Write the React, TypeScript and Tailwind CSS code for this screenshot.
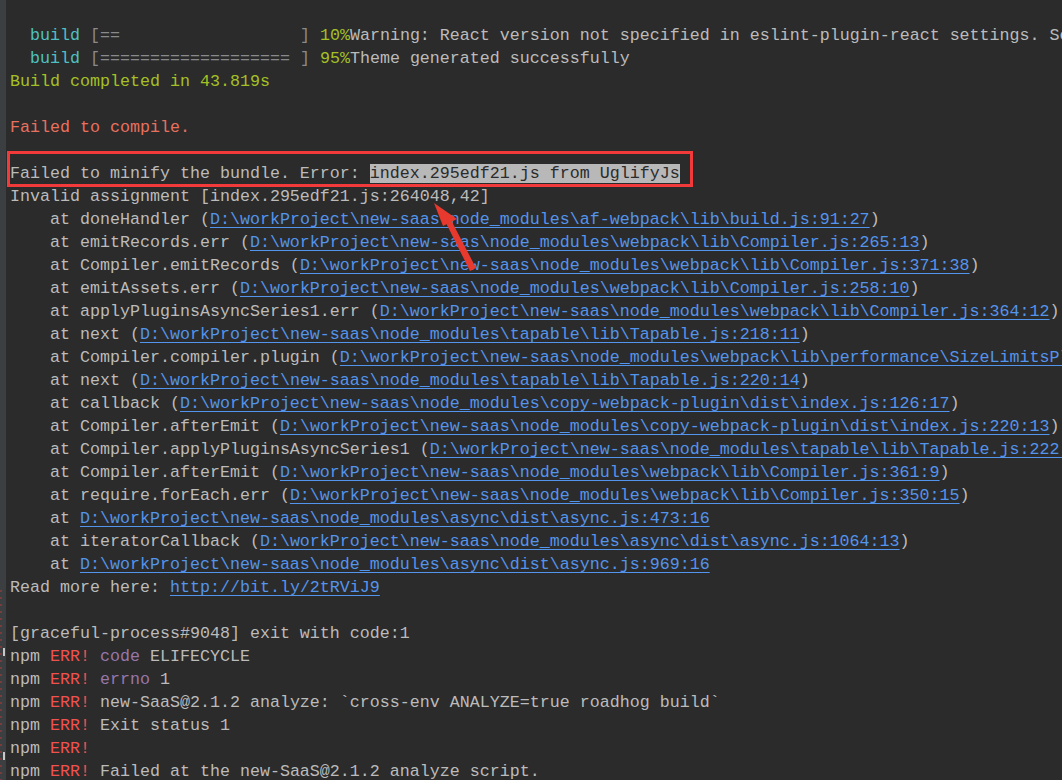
import React from 'react';

type Seg = { t: string; c?: string; link?: boolean; hl?: boolean };
type Line = Seg[];

const DEF = 'text-[#bbbbbb]';
const CYAN = 'text-[#4fc0c2]';
const OLIVE = 'text-[#a5c025]';
const SALMON = 'text-[#e8705f]';
const RED = 'text-[#f0524f]';
const PURPLE = 'text-[#9876aa]';
const GRAY = 'text-[#8a8a8a]';

const base = 'D:\\workProject\\new-saas\\node_modules\\';

// stack frame: "    at name (link)"
const frame = (name: string, path: string, close = true): Line => {
  const segs: Line = [{ t: `    at ${name} (` }, { t: base + path, link: true }];
  if (close) segs.push({ t: ')' });
  return segs;
};

const bare = (path: string): Line => [{ t: '    at ' }, { t: base + path, link: true }];

const lines: Line[] = [
  [
    { t: '  ' },
    { t: 'build', c: CYAN },
    { t: ' [', c: GRAY },
    { t: '==', c: GRAY },
    { t: '                  ] ', c: GRAY },
    { t: '10%', c: OLIVE },
    { t: 'Warning: React version not specified in eslint-plugin-react settings. See' },
  ],
  [
    { t: '  ' },
    { t: 'build', c: CYAN },
    { t: ' [', c: GRAY },
    { t: '===================', c: GRAY },
    { t: ' ] ', c: GRAY },
    { t: '95%', c: OLIVE },
    { t: 'Theme generated successfully' },
  ],
  [{ t: 'Build completed in 43.819s', c: OLIVE }],
  [],
  [{ t: 'Failed to compile.', c: SALMON }],
  [],
  [{ t: 'Failed to minify the bundle. Error: ' }, { t: 'index.295edf21.js from UglifyJs', hl: true }],
  [{ t: 'Invalid assignment [index.295edf21.js:264048,42]' }],
  frame('doneHandler', 'af-webpack\\lib\\build.js:91:27'),
  frame('emitRecords.err', 'webpack\\lib\\Compiler.js:265:13'),
  frame('Compiler.emitRecords', 'webpack\\lib\\Compiler.js:371:38'),
  frame('emitAssets.err', 'webpack\\lib\\Compiler.js:258:10'),
  frame('applyPluginsAsyncSeries1.err', 'webpack\\lib\\Compiler.js:364:12'),
  frame('next', 'tapable\\lib\\Tapable.js:218:11'),
  frame('Compiler.compiler.plugin', 'webpack\\lib\\performance\\SizeLimitsPlugin.js:56:10', false),
  frame('next', 'tapable\\lib\\Tapable.js:220:14'),
  frame('callback', 'copy-webpack-plugin\\dist\\index.js:126:17'),
  frame('Compiler.afterEmit', 'copy-webpack-plugin\\dist\\index.js:220:13'),
  frame('Compiler.applyPluginsAsyncSeries1', 'tapable\\lib\\Tapable.js:222:13', false),
  frame('Compiler.afterEmit', 'webpack\\lib\\Compiler.js:361:9'),
  frame('require.forEach.err', 'webpack\\lib\\Compiler.js:350:15'),
  bare('async\\dist\\async.js:473:16'),
  frame('iteratorCallback', 'async\\dist\\async.js:1064:13'),
  bare('async\\dist\\async.js:969:16'),
  [{ t: 'Read more here: ' }, { t: 'http://bit.ly/2tRViJ9', link: true }],
  [],
  [{ t: '[graceful-process#9048] exit with code:1' }],
  [{ t: 'npm ' }, { t: 'ERR!', c: RED }, { t: ' ' }, { t: 'code', c: PURPLE }, { t: ' ELIFECYCLE' }],
  [{ t: 'npm ' }, { t: 'ERR!', c: RED }, { t: ' ' }, { t: 'errno', c: PURPLE }, { t: ' 1' }],
  [{ t: 'npm ' }, { t: 'ERR!', c: RED }, { t: ' new-SaaS@2.1.2 analyze: `cross-env ANALYZE=true roadhog build`' }],
  [{ t: 'npm ' }, { t: 'ERR!', c: RED }, { t: ' Exit status 1' }],
  [{ t: 'npm ' }, { t: 'ERR!', c: RED }],
  [{ t: 'npm ' }, { t: 'ERR!', c: RED }, { t: ' Failed at the new-SaaS@2.1.2 analyze script.' }],
];

function Segment({ s }: { s: Seg }) {
  if (s.link) return <span className="text-[#5394ec] underline underline-offset-[3px]">{s.t}</span>;
  if (s.hl) return <span className="bg-[#b8b8b8] text-[#2b2b2b]">{s.t}</span>;
  return <span className={s.c ?? DEF}>{s.t}</span>;
}

export default function App() {
  return (
    <div className="flex w-[1062px] h-[780px] overflow-hidden bg-[#2b2b2b] font-['Liberation_Mono','Courier_New',monospace] text-[16.67px] leading-[23px]">
      {/* gutter */}
      <div className="relative w-[6px] shrink-0 bg-[#3c3f41]">
        <div className="absolute left-0 top-[590px] w-[2px] h-[190px] bg-[repeating-linear-gradient(to_bottom,#7a3b3b_0px,#7a3b3b_2px,transparent_2px,transparent_7px)]" />
        <div className="absolute left-[3px] top-[648px] w-[2px] h-[8px] bg-[#c8c8c8]" />
        <div className="absolute left-[3px] top-[752px] w-[2px] h-[8px] bg-[#c8c8c8]" />
      </div>

      <div className="relative flex-1 pl-[4px] pt-[24px] whitespace-pre overflow-hidden">
        {lines.map((l, i) => (
          <div key={i} className="h-[23px]">
            {l.map((s, j) => (
              <Segment key={j} s={s} />
            ))}
          </div>
        ))}

        {/* red annotation box */}
        <div className="absolute left-[1px] top-[151px] w-[686px] h-[36px] border-[3px] border-[#f23a3a]" />

        {/* red arrow */}
        <svg className="absolute left-[414px] top-[195px]" width="70" height="80" viewBox="0 0 70 80">
          <polygon points="56,73 50,76 26,28 31,25" fill="#e8392f" />
          <polygon points="14,8 37,24 23,31" fill="#e8392f" />
        </svg>
      </div>
    </div>
  );
}
